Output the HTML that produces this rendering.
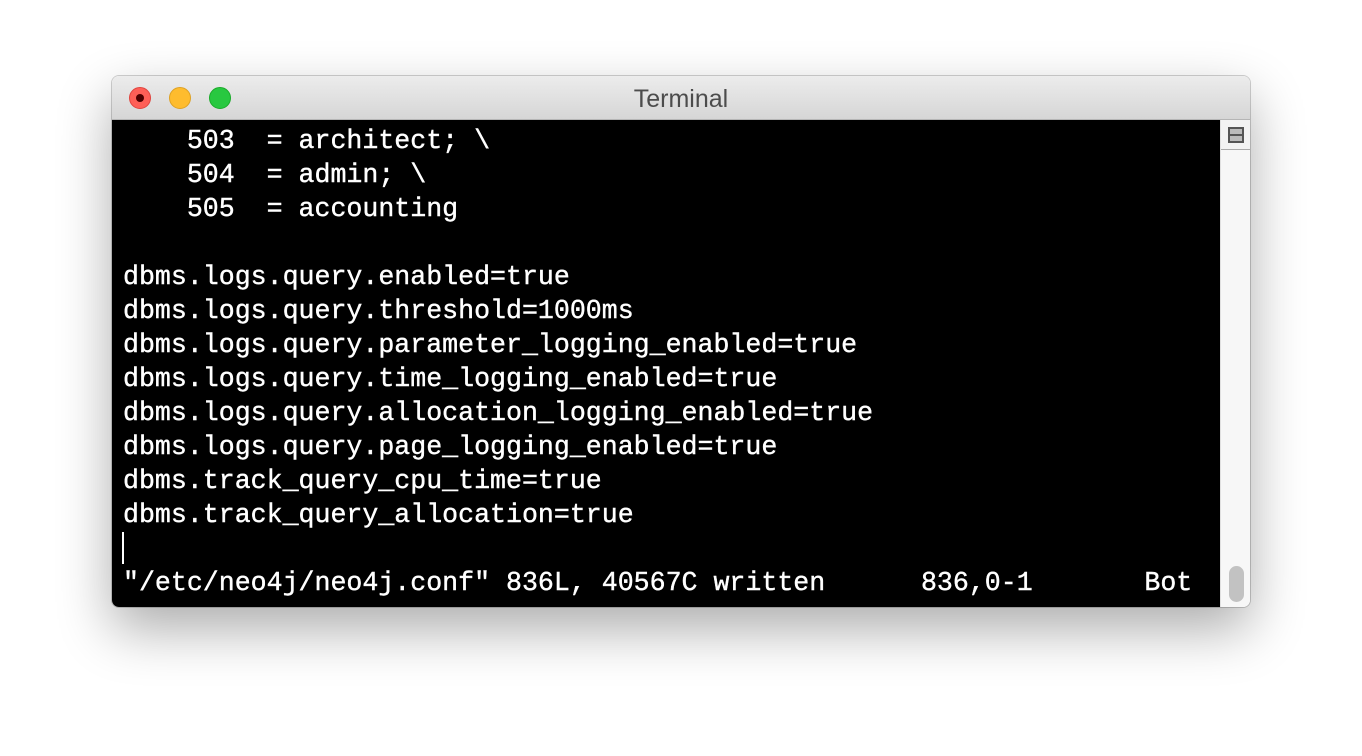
<!DOCTYPE html>
<html><head><style>
html,body{margin:0;padding:0;width:1362px;height:756px;background:#fff;overflow:hidden}
.win{position:absolute;left:112px;top:76px;width:1138px;height:531px;border-radius:7px;overflow:hidden;box-shadow:0 22px 55px rgba(0,0,0,0.33),0 0 0 1px rgba(0,0,0,0.18)}
.title{position:absolute;left:0;top:0;width:100%;height:43px;background:linear-gradient(#ececec,#d6d6d6);border-bottom:1px solid #b5b5b5;text-align:center;font:25px "Liberation Sans",sans-serif;line-height:46px;color:#4c4c4c}
.dot{position:absolute;top:11px;width:22px;height:22px;border-radius:50%;box-sizing:border-box}
.term{position:absolute;left:0;top:44px;width:1108px;height:487px;background:#000}
.sb{position:absolute;left:1108px;top:44px;width:30px;height:487px;background:#f7f7f7;border-left:1px solid #e0e0e0;box-sizing:border-box}
pre{margin:0;position:absolute;left:11px;top:4px;font:26.6px "Liberation Mono",monospace;line-height:34px;color:#fff;-webkit-text-stroke:0.4px #fff}
</style></head><body>
<div class="win">
<div class="title">Terminal
<div class="dot" style="left:17px;background:#fe5f57;border:1px solid #e0443e"><div style="position:absolute;left:6px;top:6px;width:8px;height:8px;border-radius:50%;background:#4d0000"></div></div>
<div class="dot" style="left:57px;background:#febc2e;border:1px solid #dea123"></div>
<div class="dot" style="left:97px;background:#28c840;border:1px solid #1aab29"></div>
</div>
<div class="term"><pre>    503  = architect; \
    504  = admin; \
    505  = accounting

dbms.logs.query.enabled=true
dbms.logs.query.threshold=1000ms
dbms.logs.query.parameter_logging_enabled=true
dbms.logs.query.time_logging_enabled=true
dbms.logs.query.allocation_logging_enabled=true
dbms.logs.query.page_logging_enabled=true
dbms.track_query_cpu_time=true
dbms.track_query_allocation=true

"/etc/neo4j/neo4j.conf" 836L, 40567C written      836,0-1       Bot</pre>
<div style="position:absolute;left:10px;top:412px;width:2px;height:32px;background:#fff"></div>
</div>
<div class="sb">
<div style="position:absolute;left:0;top:0;width:29px;height:29px;border-bottom:1px solid #aaa;background:#f3f3f3"></div>
<div style="position:absolute;left:7px;top:7px;width:16px;height:16px;box-sizing:border-box;border:2px solid #555;background:#bbb"><div style="position:absolute;left:0;top:5px;width:12px;height:2px;background:#555"></div></div>
<div style="position:absolute;left:8px;top:446px;width:15px;height:36px;border-radius:8px;background:#c2c2c2"></div>
</div>
</div>
</body></html>
